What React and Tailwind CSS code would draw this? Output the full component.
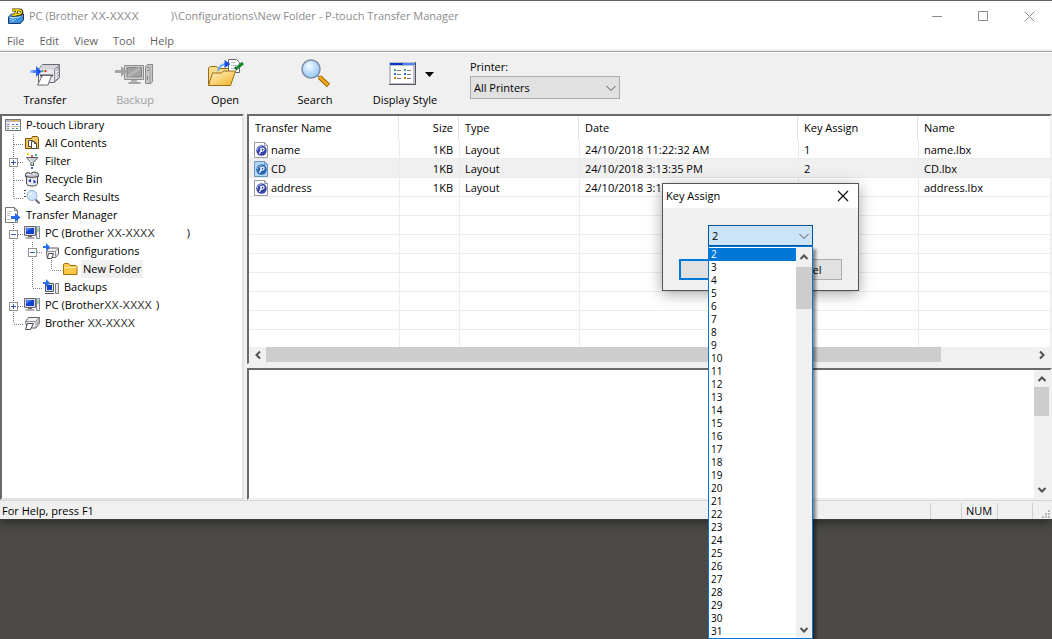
import { useState } from 'react';

const uiFont = "font-['Open_Sans','Noto_Sans',sans-serif]";
const modelFont = "font-['Liberation_Sans',Arial,sans-serif]";

/* ---------- icons ---------- */

function AppIcon() {
  return (
    <svg width="16" height="16" viewBox="0 0 16 16">
      <path d="M.5 9l3-3h12v6l-3 3.500H.500z" fill="#3d8fdd" stroke="#123a6b" />
      <path d="M1.500 9.500h9l4-3" stroke="#b8dcf9" fill="none" />
      <path d="M2 12l4-2M3 14l5-3" stroke="#9ccdf5" />
      <path d="M4 2h7.500c3.500 0 3 4.500-.5 4.500L4 7.500M9.500 1L7 8" stroke="#3a3000" strokeWidth="3" fill="none" />
      <path d="M4 2h7.500c3 0 2.500 4-.5 4.200L4 7.300M9.500 1L7 7.500" stroke="#ffe11a" strokeWidth="1.400" fill="none" />
    </svg>
  );
}

function TransferIcon() {
  return (
    <svg width="32" height="32" viewBox="0 0 32 32">
      <defs>
        <linearGradient id="arrowBlue" x1="0" x2="1">
          <stop offset="0" stopColor="#a8d0ff" />
          <stop offset="0.700" stopColor="#1450f0" />
        </linearGradient>
        <linearGradient id="printerSide" x1="0" x2="1">
          <stop offset="0" stopColor="#ececf0" />
          <stop offset="1" stopColor="#a4a4ae" />
        </linearGradient>
      </defs>
      <path d="M9.500 11.500l4-5h17v13l-5 5h-16z" fill="#e9e9ee" stroke="#6a6a74" />
      <path d="M10 11.500l4-4.500h16l-4.500 4.500z" fill="#d6d6dc" />
      <path d="M25.500 11.500L30 7v12l-4.500 5z" fill="url(#printerSide)" stroke="#8a8a94" />
      <path d="M27 14.500l3-2M27 17.500l3-2M27 20.500l3-2" stroke="#fff" />
      <path d="M11 16.500h13v2H11z" fill="#4a4a54" />
      <path d="M13.500 17.500h9l-3.500 9.500H8.500z" fill="#fff" stroke="#6a6a74" />
      <path d="M12.500 13h2" stroke="#35b060" strokeWidth="2" />
      <path d="M15.500 13h2" stroke="#e03030" strokeWidth="2" />
      <path d="M1 12h6V8l5.500 5.500L7 19v-4H1z" fill="url(#arrowBlue)" />
    </svg>
  );
}

function BackupIcon() {
  return (
    <svg width="40" height="32" viewBox="0 0 40 32">
      <path d="M9.500 7.500h19v14h-19z" fill="#cfcfcf" stroke="#8b8b8b" />
      <path d="M12 9.500h14.500v9.500H12z" fill="#a3a3a3" stroke="#858585" />
      <path d="M13 18.500L25 10" stroke="#b4b4b4" strokeWidth="3" />
      <path d="M16 22h6v2h-6z" fill="#b2b2b2" />
      <path d="M13.500 25h12" stroke="#8d8d8d" strokeWidth="1.500" />
      <path d="M30.500 8.500l2-2h5v17l-1.500 2h-5.500z" fill="#c6c6c6" stroke="#8b8b8b" />
      <path d="M35 8v17" stroke="#9e9e9e" />
      <path d="M32 9.500h2M32 12.500h2M32.500 18v4" stroke="#858585" />
      <path d="M0 12h6V8l6 5.500L6 19v-4H0z" fill="#a4a4a4" />
    </svg>
  );
}

function OpenIcon() {
  return (
    <svg width="38" height="32" viewBox="0 0 38 32">
      <defs>
        <linearGradient id="folderGold" x1="0" y1="0" x2="1" y2="1">
          <stop offset="0" stopColor="#fff6cc" />
          <stop offset="1" stopColor="#f3b022" />
        </linearGradient>
      </defs>
      <path d="M2.500 27V10l2-1.500h6l2 2h14v4" fill="#f9dc8c" stroke="#9a6a10" />
      <path d="M22.500 1.500h8l3 3v10h-11z" fill="#fff" stroke="#66666e" />
      <path d="M25 4.500h4M25 7.500h6M25 10.500h5" stroke="#b9b9c2" />
      <path d="M2.500 27.500L6.500 15h9l2-2h12l-5 14.500z" fill="url(#folderGold)" stroke="#9a6a10" />
      <path d="M12 13c1-5 5-7 9-7" stroke="#6aa6fa" strokeWidth="2" fill="none" />
      <path d="M18.500 2l6 4-6 4z" fill="#1450e6" />
      <path d="M31 10l6-5" stroke="#128a2e" strokeWidth="3" fill="none" />
      <path d="M29 9l2 3" stroke="#0b5c1d" strokeWidth="2" />
    </svg>
  );
}

function SearchIcon() {
  return (
    <svg width="32" height="32" viewBox="0 0 32 32">
      <defs>
        <radialGradient id="glass" cx="0.4" cy="0.35">
          <stop offset="0" stopColor="#f5fbff" />
          <stop offset="1" stopColor="#a9d2f8" />
        </radialGradient>
      </defs>
      <path d="M19 18l3 2" stroke="#777" strokeWidth="2" />
      <path d="M20.500 19l9 8.500" stroke="#9a6200" strokeWidth="4.500" />
      <path d="M20.500 19l8.500 8" stroke="#f6a814" strokeWidth="2.500" />
      <circle cx="12" cy="11" r="9" fill="url(#glass)" stroke="#7f8ea6" strokeWidth="1.500" />
    </svg>
  );
}

function DisplayStyleIcon() {
  return (
    <svg width="28" height="24" viewBox="0 0 28 24" shapeRendering="crispEdges">
      <rect x="0" y="0" width="27" height="23" fill="#c0c0ca" />
      <path d="M26.500 0v23M0 22.500h27" stroke="#55555f" />
      <rect x="1" y="1" width="13" height="2" fill="#0c36c4" />
      <rect x="14" y="1" width="12" height="2" fill="#4c86f2" />
      <rect x="2" y="4" width="22" height="17" fill="#fff" />
      <path d="M5 8h2M15 8h2" stroke="#38a878" strokeWidth="2" />
      <path d="M5 12h2M15 12h2" stroke="#2468e0" strokeWidth="2" />
      <path d="M5 16h2M15 16h2" stroke="#d88420" strokeWidth="2" />
      <path d="M8 8.500h4M18 8.500h4M8 12.500h4M18 12.500h4M8 16.500h4M18 16.500h4" stroke="#777" />
    </svg>
  );
}

function LibraryIcon() {
  return (
    <svg width="16" height="16" viewBox="0 0 16 16" shapeRendering="crispEdges">
      <rect x="0" y="2" width="16" height="12" fill="#777" />
      <rect x="1" y="3" width="14" height="10" fill="#fff" />
      <rect x="1" y="3" width="14" height="2" fill="#b9b9c4" />
      <path d="M7 3.500h7" stroke="#f0b040" />
      <rect x="1" y="5" width="4" height="8" fill="#e6e6ec" />
      <path d="M2 7.500h2M2 9.500h2M2 11.500h2" stroke="#8a8a98" />
      <path d="M7 7.500h2M11 7.500h2" stroke="#3c72d8" />
      <path d="M6 9.500h9" stroke="#bbb" />
      <path d="M7 11.500h2M11 11.500h2" stroke="#4aa06a" />
    </svg>
  );
}

function AllContentsIcon() {
  return (
    <svg width="16" height="16" viewBox="0 0 16 16">
      <path d="M1.500 13.500v-10h6l1-2h5l1 2v10z" fill="#f6c860" stroke="#7c5200" />
      <path d="M4.500 5.500h4v6h-4z" fill="#fff" stroke="#4a4a4a" />
      <path d="M7.500 6.500h3l2 2v5h-5z" fill="#fff" stroke="#4a4a4a" />
      <path d="M10.500 6.500v2h2" fill="none" stroke="#4a4a4a" />
    </svg>
  );
}

function FilterIcon() {
  return (
    <svg width="16" height="16" viewBox="0 0 16 16">
      <path d="M2.500 4.500h11.500l-4.500 5v3h-2.500v-3z" fill="#c9ccd2" stroke="#5b5f68" />
      <path d="M5 5.500l3 4" stroke="#fff" />
      <rect x="3" y="0" width="2" height="2" fill="#f2c81c" />
      <rect x="7" y="2" width="2" height="2" fill="#e85a7a" />
      <rect x="11" y="1" width="2" height="2" fill="#35b87a" />
      <rect x="7" y="14" width="2" height="2" fill="#2a6cf0" />
    </svg>
  );
}

function RecycleIcon() {
  return (
    <svg width="16" height="16" viewBox="0 0 16 16">
      <path d="M2.500 5v7q0 3 5.500 3t5.500-3V5z" fill="#eeeef3" stroke="#44444c" />
      <path d="M1.500 5.500v-2q0-2 3-2l2 1 3-1.500 3 .5q2 .5 2 2v2q-6.500 2-13 0z" fill="#c6c6cf" stroke="#44444c" />
      <path d="M4 3.500h2M9 3h2" stroke="#fff" />
      <path d="M4 10l3-2.500v4zM12.500 11l-3-2.500v4z" fill="#1c3fc0" />
    </svg>
  );
}

function SearchResultsIcon() {
  return (
    <svg width="16" height="16" viewBox="0 0 16 16">
      <path d="M0 1.500h2M0 4.500h1M0 7.500h2" stroke="#444" />
      <path d="M11.500 10.500l4 4" stroke="#6b6b74" strokeWidth="2" />
      <circle cx="8" cy="6.500" r="5" fill="#cfe6fb" stroke="#8db2d6" />
      <path d="M5.500 6l2-2" stroke="#fff" strokeWidth="1.500" />
    </svg>
  );
}

function ManagerIcon() {
  return (
    <svg width="16" height="16" viewBox="0 0 16 16">
      <path d="M.5.500h9l3 3v12H.500z" fill="#fff" stroke="#77777f" />
      <path d="M9.500.500v3h3" fill="none" stroke="#77777f" />
      <path d="M2 4.500h5M2 6.500h4M2 8.500h3M2 12.500h4" stroke="#c4c4cc" />
      <path d="M6 9h4V6l5.500 4.500L10 15v-3H6z" fill="#2a6cf0" />
    </svg>
  );
}

function PcIcon() {
  return (
    <svg width="16" height="16" viewBox="0 0 16 16">
      <path d="M.5 1.500h11v9H.500z" fill="#dcdce2" stroke="#66666e" />
      <path d="M2 3h8v6H2z" fill="#1243d0" />
      <path d="M2 3h6L2 7z" fill="#3f78f2" />
      <path d="M4 11.500h4M1.500 13h9" stroke="#66666e" />
      <path d="M12.500 1.500h3v12h-3z" fill="#eeeef2" stroke="#85858d" />
      <path d="M13 4h2M13 6h2" stroke="#55b07a" />
    </svg>
  );
}

function PrinterIcon() {
  return (
    <svg width="16" height="16" viewBox="0 0 16 16">
      <path d="M1.500 6.500l3-4h11v6l-3.500 4.500h-9z" fill="#f1f1f4" stroke="#5d5d65" />
      <path d="M2 6.500h9.500l4-4M12 6.500V12" stroke="#8d8d95" fill="none" />
      <path d="M13 6l2.500-3v5.500L13 12z" fill="#b0b0b8" />
      <path d="M3.500 8.500h6l-3 6H1.500z" fill="#fff" stroke="#4d4d55" />
    </svg>
  );
}

function ConfigurationsIcon() {
  return (
    <svg width="16" height="16" viewBox="0 0 16 16">
      <path d="M3.500 8.500l2.500-3.500h9.500v6l-3 3.500H4z" fill="#f1f1f4" stroke="#5d5d65" />
      <path d="M4 8.500h8l3.500-3M12.500 8.500v5" stroke="#8d8d95" fill="none" />
      <path d="M5.500 10.500h5l-2 5h-4z" fill="#fff" stroke="#4d4d55" />
      <path d="M0 3h3V0l4 4-4 4V5H0z" fill="#2a6cf0" />
    </svg>
  );
}

function BackupsIcon() {
  return (
    <svg width="16" height="16" viewBox="0 0 16 16">
      <path d="M2.500 4.500h8v8h-8z" fill="#dcdce2" stroke="#55555d" />
      <path d="M4 6h5v5H4z" fill="#1243d0" />
      <path d="M2 14.500h9" stroke="#55555d" />
      <path d="M12.500 4.500h3v10h-3z" fill="#e6e6ec" stroke="#77777f" />
      <path d="M0 3h3V0l4 4-4 4V5H0z" fill="#2a6cf0" />
    </svg>
  );
}

function FolderIcon() {
  return (
    <svg width="16" height="16" viewBox="0 0 16 16">
      <path d="M1.500 13.500v-10l1-1h4l1.500 2h6l1 1v8z" fill="#fbc94a" stroke="#a86f08" />
      <path d="M2.500 6.500h12" stroke="#fff0b0" />
    </svg>
  );
}

function LayoutFileIcon({ selected }) {
  const edge = selected ? '#6c94bc' : '#9b9ba3';
  return (
    <svg width="14" height="16" viewBox="0 0 14 16" className="shrink-0">
      <path d="M.5.500h10l3 3v12H.500z" fill={selected ? '#b4d8f7' : '#fff'} stroke={edge} />
      <path d="M10.500.500v3h3" fill="none" stroke={edge} />
      <circle cx="7.500" cy="8.500" r="5.200" fill={selected ? '#2763ae' : '#3442a8'} />
      <path d="M3.500 8.500a4 4 0 0 1 4-4" stroke="#aebcf2" fill="none" />
      <path d="M5.500 12l2-5M6 7q3.500-2 4 0t-3 2.500" stroke="#fff" strokeWidth="1.200" fill="none" />
    </svg>
  );
}

function Chevron({ dir = 'down', thin = false }) {
  const turn = { down: 'rotate-0', up: 'rotate-180', left: 'rotate-90', right: '-rotate-90' }[dir];
  return (
    <svg width="10" height="10" viewBox="0 0 10 10" className={`shrink-0 ${turn}`}>
      <path d={thin ? 'M.5 3L5 7.500 9.500 3' : 'M1.500 3L5 6.500 8.500 3'} fill="none" stroke="#505050" strokeWidth={thin ? 1 : 2} />
    </svg>
  );
}

/* ---------- window chrome ---------- */

function TitleBar() {
  return (
    <header className="flex h-[30px] items-center pl-2 text-[#8c8c8c]">
      <AppIcon />
      <h1 className="flex-1 whitespace-pre pl-[5px]">
        PC (Brother <span className={modelFont}>XX-XXXX</span>
        <span className="pl-8">)\Configurations\New Folder - P-touch Transfer Manager</span>
      </h1>
      <button aria-label="Minimize" className="flex h-full w-[46px] items-center justify-center">
        <svg width="11" height="11" viewBox="0 0 11 11"><path d="M0 5.500h10" stroke="#8c8c8c" /></svg>
      </button>
      <button aria-label="Maximize" className="flex h-full w-[46px] items-center justify-center">
        <svg width="11" height="11" viewBox="0 0 11 11"><path d="M.5.500h9v9h-9z" fill="none" stroke="#8c8c8c" /></svg>
      </button>
      <button aria-label="Close" className="flex h-full w-[46px] items-center justify-center">
        <svg width="11" height="11" viewBox="0 0 11 11"><path d="M.5.500l10 10M10.500.500l-10 10" stroke="#8c8c8c" /></svg>
      </button>
    </header>
  );
}

function MenuBar() {
  return (
    <nav className="flex h-[18px] items-end gap-[15px] pl-[7px] text-[#5f5f5f]">
      {['File', 'Edit', 'View', 'Tool', 'Help'].map((item) => (
        <button key={item}>{item}</button>
      ))}
    </nav>
  );
}

function ToolButton({ label, disabled, children }) {
  return (
    <button disabled={disabled} className="flex w-[90px] flex-col items-center text-black disabled:text-[#a0a0a0]">
      <span className="flex h-8 items-center gap-2">{children}</span>
      <span className="mt-[2px]">{label}</span>
    </button>
  );
}

function Toolbar() {
  return (
    <div className="mt-[2px] flex h-[63px] border-t border-[#a0a0a0] bg-[#f0f0f0] pt-[6px] shadow-[inset_0_1px_0_#fff]">
      <ToolButton label="Transfer"><TransferIcon /></ToolButton>
      <ToolButton label="Backup" disabled><BackupIcon /></ToolButton>
      <ToolButton label="Open"><OpenIcon /></ToolButton>
      <ToolButton label="Search"><SearchIcon /></ToolButton>
      <ToolButton label="Display Style">
        <span className="w-1"></span>
        <DisplayStyleIcon />
        <svg width="9" height="5" viewBox="0 0 9 5"><path d="M0 0h9L4.500 5z" /></svg>
      </ToolButton>
      <div className="ml-5 flex flex-col">
        <label htmlFor="printer" className="leading-[18px]">Printer:</label>
        <div className="relative">
          <select id="printer" className="h-[23px] w-[150px] appearance-none border border-[#adadad] bg-[#e1e1e1] pl-[3px]">
            <option>All Printers</option>
          </select>
          <span className="pointer-events-none absolute inset-y-0 right-1 flex items-center"><Chevron thin /></span>
        </div>
      </div>
    </div>
  );
}

/* ---------- tree ---------- */

const tree = [
  { label: 'P-touch Library', icon: LibraryIcon, guides: [] },
  { label: 'All Contents', icon: AllContentsIcon, guides: ['tee'] },
  { label: 'Filter', icon: FilterIcon, guides: ['plus'] },
  { label: 'Recycle Bin', icon: RecycleIcon, guides: ['tee'] },
  { label: 'Search Results', icon: SearchResultsIcon, guides: ['end'] },
  { label: 'Transfer Manager', icon: ManagerIcon, guides: [] },
  { label: 'PC (Brother ', model: 'XX-XXXX', tail: ')', tailGap: 'pl-8', icon: PcIcon, guides: ['minus'] },
  { label: 'Configurations', icon: ConfigurationsIcon, guides: ['line', 'minus'] },
  { label: 'New Folder', icon: FolderIcon, guides: ['line', 'line', 'end'], selected: true },
  { label: 'Backups', icon: BackupsIcon, guides: ['line', 'end'] },
  { label: 'PC (Brother', model: 'XX-XXXX', tail: ')', tailGap: 'pl-1', icon: PcIcon, guides: ['plus'] },
  { label: 'Brother ', model: 'XX-XXXX', icon: PrinterIcon, guides: ['end'] },
];

function Guide({ kind }) {
  const vertical = kind === 'end' ? 'M8.500 0v10' : 'M8.500 0v18';
  const branch = kind === 'line' ? '' : 'M8.500 10.500H18';
  const lines = (
    <svg width="19" height="18" viewBox="0 0 19 18" shapeRendering="crispEdges">
      <path d={`${vertical}${branch}`} fill="none" stroke="#808080" strokeDasharray="1 1" />
      {(kind === 'plus' || kind === 'minus') && (
        <>
          <rect x="4.500" y="6.500" width="8" height="8" fill="#fff" stroke="#919191" />
          <path d={kind === 'plus' ? 'M6 10.500h5M8.500 8v5' : 'M6 10.500h5'} stroke="#3a5ca8" />
        </>
      )}
    </svg>
  );
  if (kind === 'plus') return <button aria-label="Expand">{lines}</button>;
  if (kind === 'minus') return <button aria-label="Collapse">{lines}</button>;
  return lines;
}

function Tree() {
  return (
    <ul className="w-[244px] shrink-0 border-2 border-t-[#696969] border-l-[#696969] border-r-[#e3e3e3] border-b-[#e3e3e3] bg-white pl-[3px]">
      {tree.map(({ label, model, tail, tailGap, icon: Icon, guides, selected }, i) => (
        <li key={i} className="flex h-[18px] items-center whitespace-pre">
          {guides.map((kind, g) => <Guide key={g} kind={kind} />)}
          <Icon />
          <span className={`ml-[3px] px-[2px] leading-[18px] ${selected ? 'bg-[#f0f0f0]' : ''}`}>
            {label}
            {model && <span className={`${modelFont} text-[#333]`}>{model}</span>}
            {tail && <span className={tailGap}>{tail}</span>}
          </span>
        </li>
      ))}
    </ul>
  );
}

/* ---------- file list ---------- */

const files = [
  { transfer: 'name', date: '24/10/2018 11:22:32 AM', keyNo: 1, name: 'name.lbx' },
  { transfer: 'CD', date: '24/10/2018 3:13:35 PM', keyNo: 2, name: 'CD.lbx', selected: true },
  { transfer: 'address', date: '24/10/2018 3:1', keyNo: '', name: 'address.lbx' },
];

const columns = [
  { title: 'Transfer Name', style: 'w-[150px] pl-[6px] text-left' },
  { title: 'Size', style: 'w-[60px] pr-[5px] text-right' },
  { title: 'Type', style: 'w-[120px] pl-[6px] text-left' },
  { title: 'Date', style: 'w-[219px] pl-[6px] text-left' },
  { title: 'Key Assign', style: 'w-[120px] pl-[6px] text-left' },
  { title: 'Name', style: 'pl-[6px] text-left' },
];

function FileTable() {
  const cell = 'border-b border-l border-[#ececec] pt-[2px] pl-[5px]';
  return (
    <div className="border-2 border-b border-t-[#696969] border-l-[#696969] border-r-[#f0f0f0] border-b-[#f0f0f0] bg-white">
      <table className="w-full table-fixed border-separate border-spacing-0">
        <thead>
          <tr className="h-6">
            {columns.map((c) => (
              <th key={c.title} className={`border-r border-[#e2e2e2] p-0 font-normal last:border-r-0 ${c.style}`}>{c.title}</th>
            ))}
          </tr>
        </thead>
        <tbody>
          {files.map((f) => (
            <tr key={f.transfer} className={`h-[19px] ${f.selected ? 'bg-[#f0f0f0]' : ''}`}>
              <td className="border-b border-[#ececec] pt-[2px] pl-[5px]">
                <span className="flex items-center gap-[3px]"><LayoutFileIcon selected={f.selected} />{f.transfer}</span>
              </td>
              <td className="border-b border-l border-[#ececec] pt-[2px] pr-[6px] text-right">1KB</td>
              <td className={cell}>Layout</td>
              <td className={cell}>{f.date}</td>
              <td className={cell}>{f.keyNo}</td>
              <td className={cell}>{f.name}</td>
            </tr>
          ))}
          {Array.from({ length: 8 }, (_, r) => (
            <tr key={r} className="h-[19px] last:h-[17px]">
              {columns.map((c, i) => (
                <td key={c.title} className={`border-[#ececec] p-0 ${i ? 'border-l' : ''} ${r < 7 ? 'border-b' : ''}`}></td>
              ))}
            </tr>
          ))}
        </tbody>
      </table>
      <div className="flex h-4 bg-[#f0f0f0]">
        <button aria-label="Scroll left" className="flex h-[15px] w-[17px] items-center justify-center"><Chevron dir="left" /></button>
        <div className="flex-1"><div className="h-[15px] w-[88%] bg-[#cdcdcd]"></div></div>
        <button aria-label="Scroll right" className="flex h-[15px] w-[17px] items-center justify-center"><Chevron dir="right" /></button>
      </div>
    </div>
  );
}

function PreviewPane() {
  return (
    <div className="flex h-[132px] justify-end border-2 border-t-[#696969] border-l-[#696969] border-r-[#f0f0f0] border-b-[#f0f0f0] bg-white">
      <div className="flex w-4 flex-col bg-[#f0f0f0]">
        <button aria-label="Scroll up" className="flex h-[17px] items-center justify-center"><Chevron dir="up" /></button>
        <div className="flex-1"><div className="h-[29px] w-[15px] bg-[#cdcdcd]"></div></div>
        <button aria-label="Scroll down" className="flex h-[17px] items-center justify-center"><Chevron /></button>
      </div>
    </div>
  );
}

function StatusBar() {
  return (
    <footer className="flex h-[19px] items-end border-t border-[#d7d7d7] pl-[2px]">
      <span className="flex-1">For Help, press F1</span>
      <span className="h-4 w-[31px] border-l border-[#d0d0d0]"></span>
      <span className="h-4 w-9 border-l border-[#d0d0d0] pl-1 leading-4">NUM</span>
      <span className="h-4 w-[35px] border-l border-[#d0d0d0]"></span>
      <span className="flex h-4 w-5 items-end justify-end border-l border-[#d0d0d0] pr-[1px]">
        <svg width="9" height="9" viewBox="0 0 9 9" fill="#b8b8b8">
          <path d="M6 0h2v2H6zM3 3h2v2H3zM6 3h2v2H6zM0 6h2v2H0zM3 6h2v2H3zM6 6h2v2H6z" />
        </svg>
      </span>
    </footer>
  );
}

/* ---------- dialog ---------- */

const keyNumbers = Array.from({ length: 30 }, (_, i) => i + 2);

function KeyAssignDialog() {
  const [assigned, setAssigned] = useState(2);
  return (
    <section role="dialog" aria-labelledby="key-title" className="absolute top-[183px] left-[662px] w-[197px] border border-[#555] bg-[#f0f0f0] shadow-[0_3px_14px_rgba(0,0,0,0.35)]">
      <div className="flex h-6 items-center justify-between bg-white pr-[9px] pl-[3px]">
        <h2 id="key-title">Key Assign</h2>
        <button aria-label="Close dialog">
          <svg width="12" height="12" viewBox="0 0 12 12"><path d="M1 1l10 10M11 1L1 11" stroke="#111" strokeWidth="1.200" /></svg>
        </button>
      </div>
      <div className="px-4 pt-[17px] pb-[10px]">
        <div className="relative mx-auto w-[105px]">
          <select
            aria-label="Key number"
            value={assigned}
            onChange={(e) => setAssigned(Number(e.target.value))}
            className="block h-[21px] w-full appearance-none border border-[#005499] bg-[#cce4f7] pl-[3px]"
          >
            {keyNumbers.map((n) => <option key={n}>{n}</option>)}
          </select>
          <span className="pointer-events-none absolute inset-y-0 right-1 flex items-center"><Chevron thin /></span>
          <div className="absolute top-full left-0 z-10 flex w-full border border-[#0078d7] bg-white shadow-[3px_3px_3px_rgba(0,0,0,0.45)]">
            <ul className="flex-1 pt-px text-[10px] leading-[13px]">
              {keyNumbers.map((n) => (
                <li key={n} onClick={() => setAssigned(n)} className={`pl-[2px] ${n === assigned ? 'bg-[#0078d7] text-white' : ''}`}>{n}</li>
              ))}
            </ul>
            <div className="flex w-4 flex-col bg-[#f0f0f0]">
              <button aria-label="Previous keys" className="flex h-5 items-center justify-center"><Chevron dir="up" /></button>
              <div className="flex-1"><div className="h-[42px] bg-[#cdcdcd]"></div></div>
              <button aria-label="Next keys" className="flex h-[17px] items-center justify-center"><Chevron /></button>
            </div>
          </div>
        </div>
        <div className="mt-[13px] flex justify-between">
          <button className="h-[21px] w-[75px] border-2 border-[#0078d7] bg-[#e1e1e1]">OK</button>
          <button className="h-[21px] w-[75px] border border-[#adadad] bg-[#e1e1e1]">Cancel</button>
        </div>
      </div>
    </section>
  );
}

export default function App() {
  return (
    <main className={`relative min-h-screen overflow-hidden bg-[#4b4a48] text-[11px] leading-4 text-black ${uiFont}`}>
      <div className="border-y border-t-[#5f5f5f] border-b-[#3a3a3a] bg-[#f0f0f0] shadow-[0_2px_10px_rgba(0,0,0,0.5)]">
        <div className="bg-white">
          <TitleBar />
          <MenuBar />
        </div>
        <Toolbar />
        <div className="flex gap-[3px]">
          <Tree />
          <div className="flex min-w-0 flex-1 flex-col gap-1">
            <FileTable />
            <PreviewPane />
          </div>
        </div>
        <StatusBar />
      </div>
      <KeyAssignDialog />
    </main>
  );
}
